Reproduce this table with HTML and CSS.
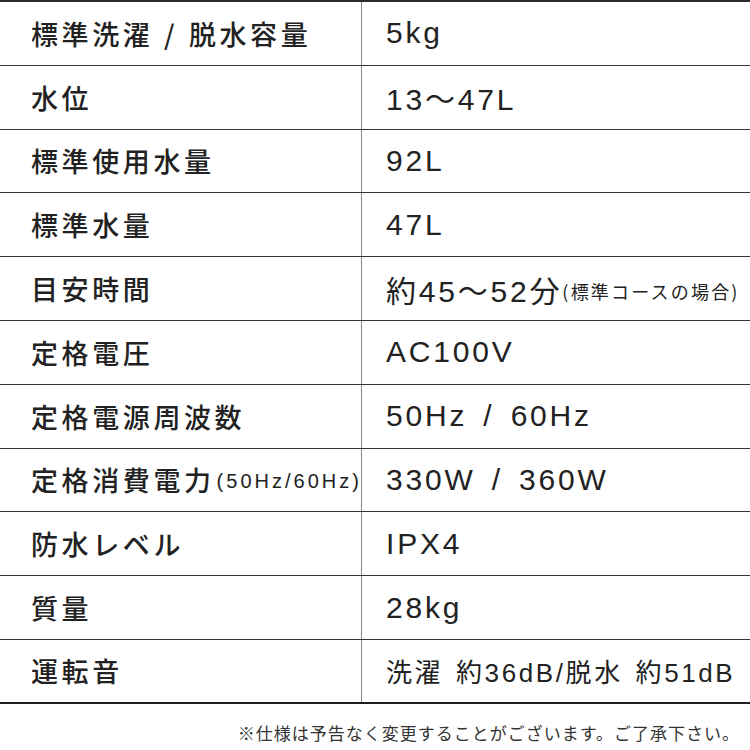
FILE: index.html
```html
<!DOCTYPE html>
<html lang="ja">
<head>
<meta charset="utf-8">
<link rel="stylesheet" href="styles.css">
</head>
<body>
<div class="spec">
  <div class="row"><div class="k">標準洗濯 / 脱水容量</div><div class="v">5kg</div></div>
  <div class="row"><div class="k">水位</div><div class="v">13〜47L</div></div>
  <div class="row"><div class="k">標準使用水量</div><div class="v">92L</div></div>
  <div class="row"><div class="k">標準水量</div><div class="v">47L</div></div>
  <div class="row"><div class="k">目安時間</div><div class="v">約45〜52分<span class="note">(標準コースの場合)</span></div></div>
  <div class="row"><div class="k">定格電圧</div><div class="v">AC100V</div></div>
  <div class="row"><div class="k">定格電源周波数</div><div class="v">50Hz / 60Hz</div></div>
  <div class="row"><div class="k">定格消費電力<span class="knote">(50Hz/60Hz)</span></div><div class="v">330W / 360W</div></div>
  <div class="row"><div class="k">防水レベル</div><div class="v">IPX4</div></div>
  <div class="row"><div class="k">質量</div><div class="v">28kg</div></div>
  <div class="row last"><div class="k">運転音</div><div class="v small">洗濯 約36dB/脱水 約51dB</div></div>
</div>
<p class="foot">※仕様は予告なく変更することがございます。ご了承下さい。</p>
</body>
</html>
```
FILE: styles.css
```css
html, body {
  margin: 0;
  padding: 0;
  background: #fff;
}
body {
  width: 750px;
  font-family: "Noto Sans CJK JP", "Noto Sans", sans-serif;
  color: #222;
}
.spec {
  border-top: 2px solid #2a2a2a;
}
.row {
  display: grid;
  grid-template-columns: 362px 1fr;
  height: 63.8px;
  box-sizing: border-box;
  border-bottom: 1px solid #333;
}
.row.last {
  border-bottom: 2px solid #1e1e1e;
}
.k {
  display: flex;
  align-items: center;
  padding-left: 31px;
  border-right: 1px solid #888;
  font-size: 27px;
  font-weight: 500;
  letter-spacing: 3.6px;
  word-spacing: 1px;
  white-space: nowrap;
}
.knote {
  font-family: "Liberation Sans", "Noto Sans CJK JP", sans-serif;
  font-size: 20px;
  font-weight: 400;
  letter-spacing: 3px;
  word-spacing: 0;
  margin-left: 2px;
  padding-top: 4px;
}
.v {
  display: flex;
  align-items: center;
  padding-left: 24px;
  font-family: "Liberation Sans", "Noto Sans CJK JP", sans-serif;
  font-size: 30px;
  font-weight: 400;
  letter-spacing: 2.8px;
  word-spacing: 5px;
  white-space: nowrap;
}
.v.small {
  font-size: 26px;
  letter-spacing: 2.6px;
  word-spacing: 3px;
}
.note {
  font-family: "Noto Sans CJK JP", sans-serif;
  font-size: 18px;
  letter-spacing: 2.2px;
  word-spacing: 0;
  padding-top: 4px;
}
.foot {
  margin: 0;
  padding-top: 16px;
  padding-right: 10px;
  text-align: right;
  font-size: 17px;
  color: #333;
  letter-spacing: 1px;
}
```
